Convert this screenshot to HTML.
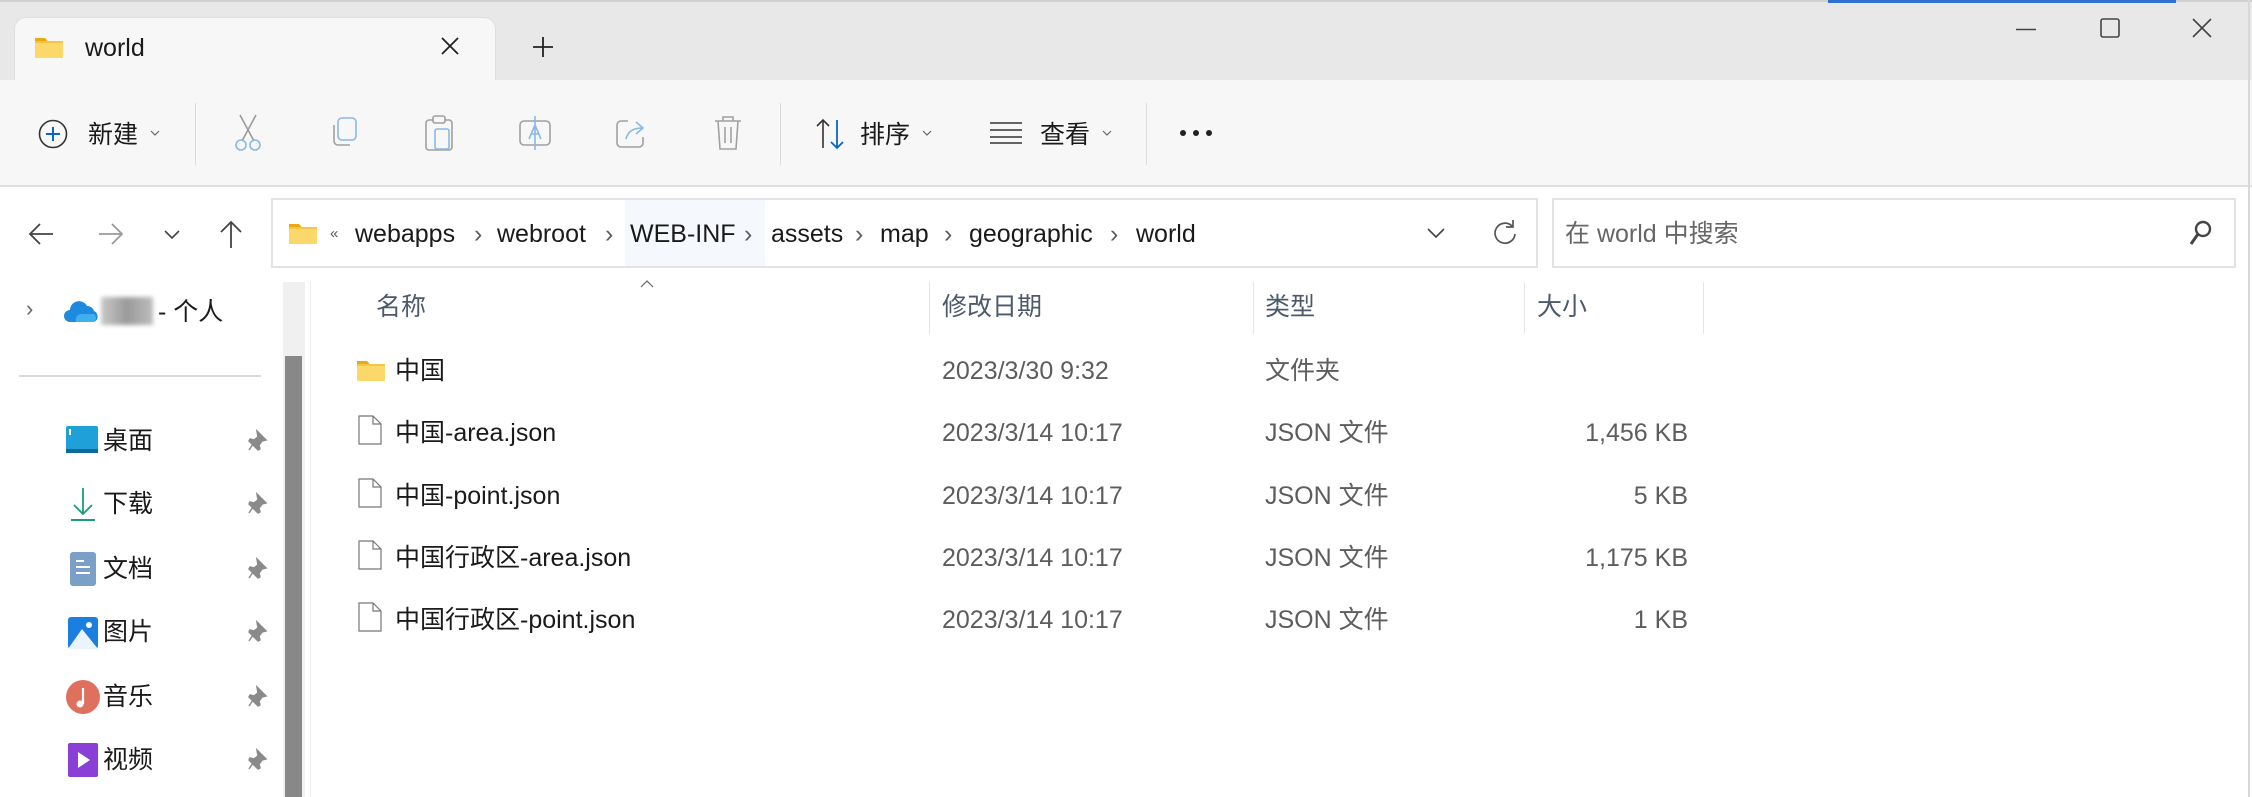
<!DOCTYPE html>
<html><head><meta charset="utf-8"><style>
*{margin:0;padding:0;box-sizing:border-box}
body{width:2252px;height:797px;overflow:hidden;background:#fff;font-family:"Liberation Sans","Noto Sans CJK SC",sans-serif;font-size:25px;color:#1a1a1a;position:relative}
.a{position:absolute;white-space:nowrap}
.t{line-height:30px}
.g{color:#5d5d5d}
svg{position:absolute;overflow:visible}
</style></head><body>
<div class="a" style="left:0;top:0;width:2252px;height:80px;background:#e8e8e8;border-top:2px solid #d0d0d0"></div>
<div class="a" style="left:1828px;top:0;width:348px;height:3px;background:#2f6fd1"></div>
<div class="a" style="left:14px;top:17px;width:482px;height:66px;background:#f7f7f7;border:1px solid #dedede;border-bottom:none;border-radius:12px 12px 0 0"></div>
<svg style="left:34px;top:35px" width="30" height="24"><path d="M1 3h10l3 3h15v17H1z" fill="#f6c544"/><path d="M1 8h28v15H1z" fill="#fcd76a"/><path d="M1 3h10l2 3H1z" fill="#e9a912"/></svg>
<div class="a t" style="left:85px;top:33px">world</div>
<svg style="left:441px;top:37px" width="18" height="18"><path d="M1 1L17 17M17 1L1 17" stroke="#222" stroke-width="1.8"/></svg>
<svg style="left:533px;top:37px" width="20" height="20"><path d="M10 0V20M0 10H20" stroke="#222" stroke-width="1.8"/></svg>
<svg style="left:2016px;top:28px" width="20" height="4"><path d="M0 1.5H20" stroke="#444" stroke-width="1.6"/></svg>
<svg style="left:2100px;top:18px" width="20" height="20"><rect x="1" y="1" width="18" height="18" rx="2" fill="none" stroke="#444" stroke-width="1.6"/></svg>
<svg style="left:2192px;top:18px" width="20" height="20"><path d="M1 1L19 19M19 1L1 19" stroke="#444" stroke-width="1.6"/></svg>
<div class="a" style="left:0;top:80px;width:2252px;height:107px;background:#f7f7f7;border-bottom:2px solid #dedede"></div>
<svg style="left:38px;top:119px" width="30" height="30"><circle cx="15" cy="15" r="13.5" fill="none" stroke="#333" stroke-width="1.6"/><path d="M15 8V22M8 15H22" stroke="#0a64c8" stroke-width="2"/></svg>
<div class="a t" style="left:88px;top:120px">新建</div>
<svg style="left:150px;top:130px" width="10" height="6"><path d="M1 1l4 4 4-4" fill="none" stroke="#666" stroke-width="1.2"/></svg>
<div class="a" style="left:195px;top:103px;width:1px;height:62px;background:#dcdcdc"></div>
<svg style="left:234px;top:115px" width="28" height="36"><path d="M6 0L20 26M22 0L8 26" stroke="#9a9a9a" stroke-width="1.6"/><circle cx="7" cy="30" r="5" fill="none" stroke="#8ab8e6" stroke-width="1.6"/><circle cx="21" cy="30" r="5" fill="none" stroke="#8ab8e6" stroke-width="1.6"/></svg>
<svg style="left:330px;top:117px" width="28" height="32"><rect x="8" y="1" width="18" height="22" rx="4" fill="none" stroke="#8ab8e6" stroke-width="1.6"/><path d="M4 8v16a4 4 0 0 0 4 4h12" fill="none" stroke="#a0a0a0" stroke-width="1.6"/></svg>
<svg style="left:425px;top:115px" width="30" height="36"><rect x="1" y="5" width="26" height="30" rx="3" fill="none" stroke="#a0a0a0" stroke-width="1.6"/><rect x="8" y="1" width="12" height="7" rx="2" fill="#f7f7f7" stroke="#a0a0a0" stroke-width="1.6"/><rect x="10" y="14" width="14" height="20" rx="2" fill="none" stroke="#8ab8e6" stroke-width="1.6"/></svg>
<svg style="left:519px;top:115px" width="32" height="36"><rect x="1" y="6" width="30" height="24" rx="4" fill="none" stroke="#a0a0a0" stroke-width="1.6"/><path d="M10 24L16 10L22 24M12 19H20M16 1V35" stroke="#8ab8e6" stroke-width="1.6" fill="none"/></svg>
<svg style="left:616px;top:117px" width="30" height="32"><path d="M12 4H5a4 4 0 0 0-4 4v18a4 4 0 0 0 4 4h18a4 4 0 0 0 4-4v-6" fill="none" stroke="#a0a0a0" stroke-width="1.6"/><path d="M10 22c2-8 8-11 16-11M20 5l7 6-7 6" fill="none" stroke="#8ab8e6" stroke-width="1.6"/></svg>
<svg style="left:714px;top:115px" width="28" height="36"><path d="M1 6H27M9 6V2h10v4M4 6l2 28h16l2-28M11 12v16M17 12v16" fill="none" stroke="#a0a0a0" stroke-width="1.6"/></svg>
<div class="a" style="left:780px;top:103px;width:1px;height:62px;background:#dcdcdc"></div>
<svg style="left:815px;top:118px" width="32" height="32"><path d="M8 30V2M2 8l6-6 6 6" fill="none" stroke="#333" stroke-width="1.6"/><path d="M22 2V30M16 24l6 6 6-6" fill="none" stroke="#0a64c8" stroke-width="1.8"/></svg>
<div class="a t" style="left:860px;top:120px">排序</div>
<svg style="left:922px;top:130px" width="10" height="6"><path d="M1 1l4 4 4-4" fill="none" stroke="#666" stroke-width="1.2"/></svg>
<svg style="left:990px;top:122px" width="32" height="22"><path d="M0 1H32M0 8H32M0 15H32M0 21H32" stroke="#333" stroke-width="1.6"/></svg>
<div class="a t" style="left:1040px;top:120px">查看</div>
<svg style="left:1102px;top:130px" width="10" height="6"><path d="M1 1l4 4 4-4" fill="none" stroke="#666" stroke-width="1.2"/></svg>
<div class="a" style="left:1146px;top:103px;width:1px;height:62px;background:#dcdcdc"></div>
<svg style="left:1180px;top:130px" width="34" height="6"><circle cx="3" cy="3" r="3" fill="#222"/><circle cx="16" cy="3" r="3" fill="#222"/><circle cx="29" cy="3" r="3" fill="#222"/></svg>
<svg style="left:28px;top:222px" width="26" height="24"><path d="M25 12H2M12 2L2 12l10 10" fill="none" stroke="#444" stroke-width="1.8"/></svg>
<svg style="left:98px;top:222px" width="26" height="24"><path d="M1 12H24M14 2l10 10-10 10" fill="none" stroke="#9a9a9a" stroke-width="1.8"/></svg>
<svg style="left:164px;top:230px" width="16" height="10"><path d="M1 1l7 7 7-7" fill="none" stroke="#444" stroke-width="1.6"/></svg>
<svg style="left:219px;top:220px" width="24" height="28"><path d="M12 28V2M2 12L12 2l10 10" fill="none" stroke="#444" stroke-width="1.8"/></svg>
<div class="a" style="left:271px;top:198px;width:1267px;height:70px;border:2px solid #e3e3e3"></div>
<div class="a" style="left:625px;top:200px;width:140px;height:66px;background:#f5f9fd"></div>
<svg style="left:288px;top:221px" width="30" height="24"><path d="M1 3h10l3 3h15v17H1z" fill="#f6c544"/><path d="M1 8h28v15H1z" fill="#fcd76a"/><path d="M1 3h10l2 3H1z" fill="#e9a912"/></svg>
<div class="a t" style="left:330px;top:219px;font-size:15px;color:#555">«</div>
<div class="a t" style="left:355px;top:219px">webapps</div>
<div class="a t g" style="left:474px;top:219px">›</div>
<div class="a t" style="left:497px;top:219px">webroot</div>
<div class="a t g" style="left:605px;top:219px">›</div>
<div class="a t" style="left:630px;top:219px">WEB-INF</div>
<div class="a t g" style="left:744px;top:219px">›</div>
<div class="a t" style="left:771px;top:219px">assets</div>
<div class="a t g" style="left:855px;top:219px">›</div>
<div class="a t" style="left:880px;top:219px">map</div>
<div class="a t g" style="left:944px;top:219px">›</div>
<div class="a t" style="left:969px;top:219px">geographic</div>
<div class="a t g" style="left:1110px;top:219px">›</div>
<div class="a t" style="left:1136px;top:219px">world</div>
<svg style="left:1427px;top:228px" width="18" height="10"><path d="M1 1l8 8 8-8" fill="none" stroke="#444" stroke-width="1.6"/></svg>
<svg style="left:1493px;top:220px" width="24" height="26"><path d="M19 6A10 10 0 1 0 22 14M20 0V7H13" fill="none" stroke="#555" stroke-width="1.7"/></svg>
<div class="a" style="left:1552px;top:198px;width:684px;height:70px;border:2px solid #e3e3e3"></div>
<div class="a t" style="left:1565px;top:219px;color:#666">在 world 中搜索</div>
<svg style="left:2188px;top:220px" width="24" height="26"><circle cx="15" cy="9" r="7" fill="none" stroke="#444" stroke-width="2.4"/><path d="M10 14L3 24" stroke="#444" stroke-width="3"/></svg>
<div class="a" style="left:26px;top:296px;font-size:22px;color:#666">›</div>
<svg style="left:64px;top:298px" width="36" height="26"><path d="M6 24a6 6 0 0 1 0-12 9 9 0 0 1 17-4 7 7 0 0 1 7 5 6 6 0 0 1 0 11z" fill="#1d8ae0"/><path d="M12 24a6 6 0 0 1 6-8h12a5 5 0 0 1 0 8z" fill="#3fb0ef"/></svg>
<div class="a" style="left:101px;top:297px;width:52px;height:28px;background:linear-gradient(90deg,#c8c8c8,#9a9a9a,#bdbdbd);filter:blur(2px)"></div>
<div class="a t" style="left:158px;top:297px">- 个人</div>
<div class="a" style="left:19px;top:375px;width:242px;height:2px;background:#dadada"></div>
<div class="a" style="left:283px;top:282px;width:22px;height:515px;background:#f0f0f0"></div>
<div class="a" style="left:285px;top:356px;width:17px;height:441px;background:#888"></div>
<div class="a" style="left:310px;top:282px;width:1px;height:515px;background:#eee"></div>
<svg style="left:66px;top:426px" width="32" height="28"><rect x="0" y="0" width="32" height="27" rx="2" fill="#1fa0d8"/><rect x="0" y="23" width="32" height="4" fill="#0b6a9a"/><rect x="3" y="3" width="2" height="6" fill="#fff"/></svg>
<div class="a t" style="left:103px;top:426px">桌面</div>
<svg style="left:70px;top:488px" width="26" height="34"><path d="M13 0V26M4 17l9 9 9-9" fill="none" stroke="#1a9e7a" stroke-width="1.8"/><path d="M1 32H25" stroke="#1a9e7a" stroke-width="2"/></svg>
<div class="a t" style="left:103px;top:489px">下载</div>
<svg style="left:70px;top:552px" width="26" height="34"><rect x="0" y="0" width="26" height="34" rx="3" fill="#7aa0c8"/><path d="M6 9H14M6 15H20M6 21H20" stroke="#fff" stroke-width="2"/></svg>
<div class="a t" style="left:103px;top:554px">文档</div>
<svg style="left:68px;top:617px" width="30" height="32"><rect x="0" y="0" width="30" height="32" rx="3" fill="#1b7fe0"/><path d="M0 32L14 12L30 32z" fill="#eaf4ff"/><circle cx="21" cy="8" r="3" fill="#fff"/></svg>
<div class="a t" style="left:103px;top:617px">图片</div>
<svg style="left:66px;top:680px" width="34" height="34"><circle cx="17" cy="17" r="17" fill="#e0705e"/><path d="M17 8V24" stroke="#fff" stroke-width="2.2"/><circle cx="14" cy="24" r="3.5" fill="#fff"/></svg>
<div class="a t" style="left:103px;top:682px">音乐</div>
<svg style="left:68px;top:743px" width="30" height="34"><rect x="0" y="0" width="30" height="34" rx="2" fill="#8a3fd6"/><path d="M10 9L22 17L10 25z" fill="#fff"/></svg>
<div class="a t" style="left:103px;top:745px">视频</div>
<svg style="left:248px;top:430px" width="20" height="22"><path d="M9 1l9 9-4 1-3 4 1 4-2 1-9-9 1-2 4 1 4-3z M5 14L1 20" fill="#8a8a8a" stroke="#8a8a8a" stroke-width="1.5"/></svg>
<svg style="left:248px;top:493px" width="20" height="22"><path d="M9 1l9 9-4 1-3 4 1 4-2 1-9-9 1-2 4 1 4-3z M5 14L1 20" fill="#8a8a8a" stroke="#8a8a8a" stroke-width="1.5"/></svg>
<svg style="left:248px;top:558px" width="20" height="22"><path d="M9 1l9 9-4 1-3 4 1 4-2 1-9-9 1-2 4 1 4-3z M5 14L1 20" fill="#8a8a8a" stroke="#8a8a8a" stroke-width="1.5"/></svg>
<svg style="left:248px;top:621px" width="20" height="22"><path d="M9 1l9 9-4 1-3 4 1 4-2 1-9-9 1-2 4 1 4-3z M5 14L1 20" fill="#8a8a8a" stroke="#8a8a8a" stroke-width="1.5"/></svg>
<svg style="left:248px;top:686px" width="20" height="22"><path d="M9 1l9 9-4 1-3 4 1 4-2 1-9-9 1-2 4 1 4-3z M5 14L1 20" fill="#8a8a8a" stroke="#8a8a8a" stroke-width="1.5"/></svg>
<svg style="left:248px;top:749px" width="20" height="22"><path d="M9 1l9 9-4 1-3 4 1 4-2 1-9-9 1-2 4 1 4-3z M5 14L1 20" fill="#8a8a8a" stroke="#8a8a8a" stroke-width="1.5"/></svg>
<svg style="left:640px;top:280px" width="14" height="8"><path d="M1 7l6-6 6 6" fill="none" stroke="#666" stroke-width="1.2"/></svg>
<div class="a t" style="left:376px;top:292px;color:#4c5a6b">名称</div>
<div class="a t" style="left:942px;top:292px;color:#4c5a6b">修改日期</div>
<div class="a t" style="left:1265px;top:292px;color:#4c5a6b">类型</div>
<div class="a t" style="left:1537px;top:292px;color:#4c5a6b">大小</div>
<div class="a" style="left:929px;top:282px;width:1px;height:52px;background:#e6e6e6"></div>
<div class="a" style="left:1253px;top:282px;width:1px;height:52px;background:#e6e6e6"></div>
<div class="a" style="left:1524px;top:282px;width:1px;height:52px;background:#e6e6e6"></div>
<div class="a" style="left:1703px;top:282px;width:1px;height:52px;background:#e6e6e6"></div>
<svg style="left:356px;top:358px" width="30" height="24"><path d="M1 3h10l3 3h15v17H1z" fill="#f6c544"/><path d="M1 8h28v15H1z" fill="#fcd76a"/><path d="M1 3h10l2 3H1z" fill="#e9a912"/></svg>
<div class="a t" style="left:395px;top:356px">中国</div>
<div class="a t g" style="left:942px;top:356px">2023/3/30 9:32</div>
<div class="a t g" style="left:1265px;top:356px">文件夹</div>
<svg style="left:358px;top:415px" width="24" height="30"><path d="M1 1H15L23 9V29H1z M15 1V9H23" fill="#fff" stroke="#777" stroke-width="1.2"/></svg>
<div class="a t" style="left:395px;top:418px">中国-area.json</div>
<div class="a t g" style="left:942px;top:418px">2023/3/14 10:17</div>
<div class="a t g" style="left:1265px;top:418px">JSON 文件</div>
<div class="a t g" style="right:564px;top:418px">1,456 KB</div>
<svg style="left:358px;top:478px" width="24" height="30"><path d="M1 1H15L23 9V29H1z M15 1V9H23" fill="#fff" stroke="#777" stroke-width="1.2"/></svg>
<div class="a t" style="left:395px;top:481px">中国-point.json</div>
<div class="a t g" style="left:942px;top:481px">2023/3/14 10:17</div>
<div class="a t g" style="left:1265px;top:481px">JSON 文件</div>
<div class="a t g" style="right:564px;top:481px">5 KB</div>
<svg style="left:358px;top:540px" width="24" height="30"><path d="M1 1H15L23 9V29H1z M15 1V9H23" fill="#fff" stroke="#777" stroke-width="1.2"/></svg>
<div class="a t" style="left:395px;top:543px">中国行政区-area.json</div>
<div class="a t g" style="left:942px;top:543px">2023/3/14 10:17</div>
<div class="a t g" style="left:1265px;top:543px">JSON 文件</div>
<div class="a t g" style="right:564px;top:543px">1,175 KB</div>
<svg style="left:358px;top:602px" width="24" height="30"><path d="M1 1H15L23 9V29H1z M15 1V9H23" fill="#fff" stroke="#777" stroke-width="1.2"/></svg>
<div class="a t" style="left:395px;top:605px">中国行政区-point.json</div>
<div class="a t g" style="left:942px;top:605px">2023/3/14 10:17</div>
<div class="a t g" style="left:1265px;top:605px">JSON 文件</div>
<div class="a t g" style="right:564px;top:605px">1 KB</div>
<div class="a" style="left:2248px;top:0;width:2px;height:797px;background:#d8d8d8"></div>
</body></html>
